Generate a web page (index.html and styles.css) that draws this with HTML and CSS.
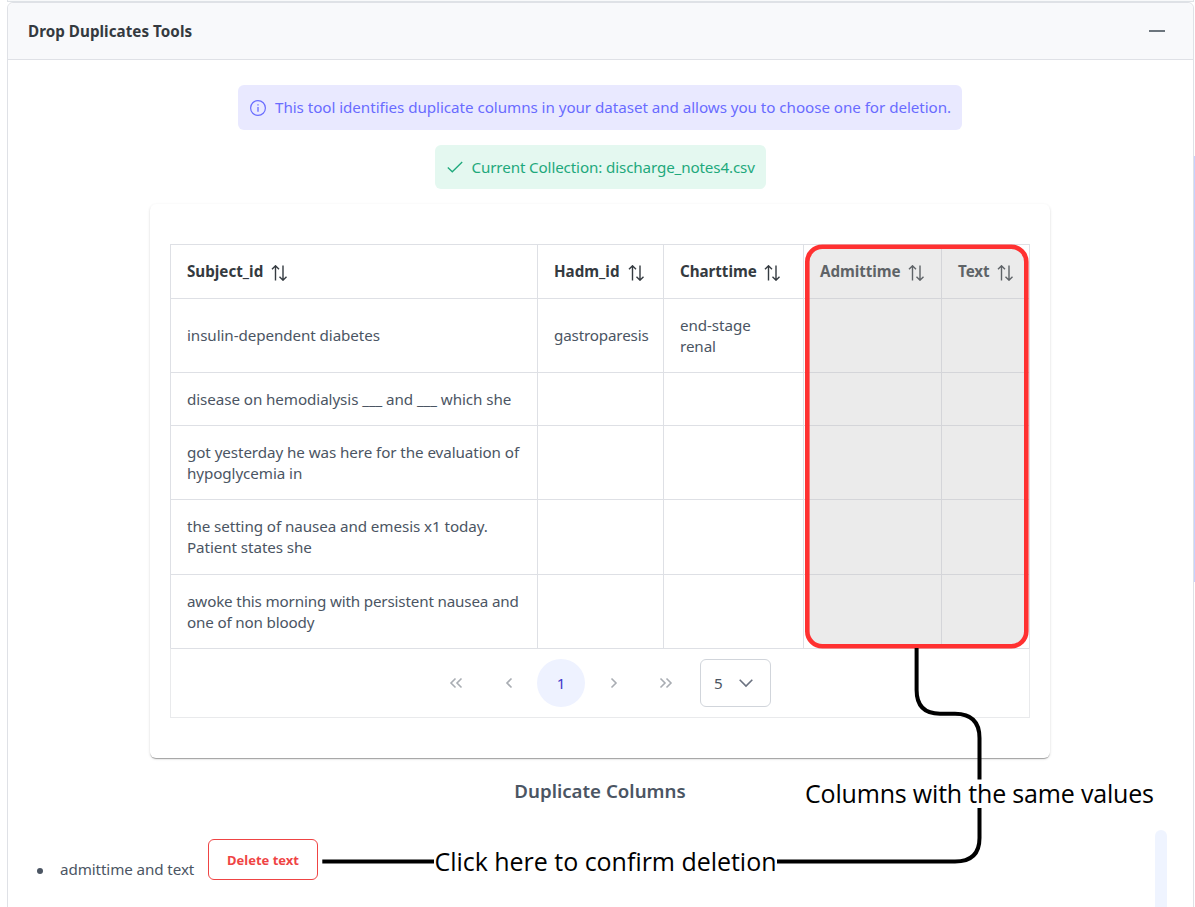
FILE: index.html
```html
<!DOCTYPE html>
<html lang="en">
<head>
<meta charset="utf-8">
<title>Drop Duplicates Tools</title>
<link rel="stylesheet" href="styles.css">
</head>
<body>
<svg class="defs" width="0" height="0">
  <symbol id="sort" viewBox="0 0 16 16"><path d="M4.500 15.500V1M1 4.300 4.500.8 8 4.300M12 .5V15M8.500 11.700 12 15.200 15.500 11.700" fill="none" stroke="currentColor" stroke-width="1.400"/></symbol>
</svg>
<div class="page">
  <div class="previous-panel"></div>
  <section class="panel">
    <header class="panel-header">
      <span class="panel-title">Drop Duplicates Tools</span>
      <span class="panel-toggle"></span>
    </header>
    <div class="panel-body">
      <div class="message info">
        <svg width="16" height="16" viewBox="0 0 16 16"><circle cx="8" cy="8" r="7.400" fill="none" stroke="currentColor" stroke-width="1.200"/><path d="M8 7v4.800M8 4.200v1.300" stroke="currentColor" stroke-width="1.300"/></svg>
        <span>This tool identifies duplicate columns in your dataset and allows you to choose one for deletion.</span>
      </div>
      <div class="message success">
        <svg width="16" height="16" viewBox="0 0 16 16"><path d="M.8 8.500 5.300 12.800 15.200 3" fill="none" stroke="currentColor" stroke-width="1.300"/></svg>
        <span>Current Collection: discharge_notes4.csv</span>
      </div>
      <div class="card">
        <table class="data">
          <colgroup><col class="c1"><col class="c2"><col class="c3"><col class="c4"><col class="c5"></colgroup>
          <thead>
            <tr class="head">
              <th><div class="th"><span>Subject_id</span><svg width="16" height="16"><use href="#sort"/></svg></div></th>
              <th><div class="th"><span>Hadm_id</span><svg width="16" height="16"><use href="#sort"/></svg></div></th>
              <th><div class="th snug"><span>Charttime</span><svg width="16" height="16"><use href="#sort"/></svg></div></th>
              <th><div class="th snug"><span>Admittime</span><svg width="16" height="16"><use href="#sort"/></svg></div></th>
              <th><div class="th snug"><span>Text</span><svg width="16" height="16"><use href="#sort"/></svg></div></th>
            </tr>
          </thead>
          <tbody>
            <tr class="double"><td>insulin-dependent diabetes</td><td class="tight">gastroparesis</td><td>end-stage<br>renal</td><td></td><td></td></tr>
            <tr class="single"><td>disease on hemodialysis ___ and ___ which she</td><td></td><td></td><td></td><td></td></tr>
            <tr class="double"><td>got yesterday he was here for the evaluation of<br>hypoglycemia in</td><td></td><td></td><td></td><td></td></tr>
            <tr class="double tall"><td>the setting of nausea and emesis x1 today.<br>Patient states she</td><td></td><td></td><td></td><td></td></tr>
            <tr class="double"><td class="tight">awoke this morning with persistent nausea and<br>one of non bloody</td><td></td><td></td><td></td><td></td></tr>
          </tbody>
        </table>
        <div class="paginator">
          <span class="page-btn"><svg width="14" height="14" viewBox="0 0 14 14"><path d="M6.500 2.500 2 7l4.500 4.500M12.500 2.500 8 7l4.500 4.500"/></svg></span>
          <span class="page-btn"><svg width="14" height="14" viewBox="0 0 14 14"><path d="M9.500 2.500 5 7l4.500 4.500"/></svg></span>
          <span class="page-btn current">1</span>
          <span class="page-btn"><svg width="14" height="14" viewBox="0 0 14 14"><path d="M4.500 2.500 9 7l-4.500 4.500"/></svg></span>
          <span class="page-btn"><svg width="14" height="14" viewBox="0 0 14 14"><path d="M1.500 2.500 6 7l-4.500 4.500M7.500 2.500 12 7l-4.500 4.500"/></svg></span>
          <span class="page-size"><span>5</span><svg width="14" height="14" viewBox="0 0 14 14"><path d="M.7 3.800 7 10.100l6.300-6.300"/></svg></span>
        </div>
      </div>
      <h3 class="subtitle">Duplicate Columns</h3>
      <div class="duplicates">
        <span class="dot"></span>
        <span class="pair">admittime and text</span>
        <button class="delete">Delete text</button>
        <span class="scroll-thumb"></span>
      </div>
    </div>
  </section>
  <div class="outer-thumb"></div>
  <svg class="annotations" width="1195" height="907" viewBox="0 0 1195 907">
    <rect x="807.300" y="246.800" width="219" height="399.500" rx="15" fill="#bebebe" fill-opacity=".31" stroke="#ff3131" stroke-width="4.600"/>
    <path d="M916.600 648V690Q916.600 713.700 940 713.700H955Q979.500 713.700 979.500 738V779.500M979.500 808V838Q979.500 861.500 955 861.500H777M434 861.500H322.300" fill="none" stroke="#000" stroke-width="4"/>
    <text x="805" y="802.500" textLength="349">Columns with the same values</text>
    <text x="434.500" y="870.500" textLength="342">Click here to confirm deletion</text>
  </svg>
</div>
</body>
</html>
```
FILE: styles.css
```css
* { box-sizing: border-box; }
body {
  margin: 0;
  background: #fff;
  color: #4b5563;
  font: 15.2px/20.600px "Noto Sans", "Open Sans", sans-serif;
}
.defs { position: absolute; }
.page { position: relative; width: 1195px; height: 907px; overflow: hidden; padding: 0 1px 0 7px; }
.previous-panel { height: 2px; background: #f8f9fa; border: 1px solid #dee2e6; border-top: 0; }
.panel { height: 920px; border: 1px solid #dfe1e6; border-radius: 6px 6px 0 0; background: #fff; }
.panel-header {
  height: 57px;
  display: flex;
  align-items: center;
  justify-content: space-between;
  padding: 0 28px 0 20px;
  background: #f8f9fb;
  border-bottom: 1px solid #dfe1e6;
  border-radius: 6px 6px 0 0;
}
.panel-title { font-weight: 700; color: #343a40; letter-spacing: .04px; }
.panel-toggle { width: 16px; height: 2px; background: #6c757d; }
.panel-body { display: flex; flex-direction: column; align-items: center; padding: 25px 1px 0 0; }
.message {
  display: flex;
  align-items: center;
  gap: 9px;
  padding: 0 12px;
  border-radius: 6px;
  white-space: nowrap;
}
.message svg { flex: none; }
.info { width: 724px; height: 45px; background: #e9e9ff; color: #696cff; letter-spacing: -.05px; }
.success { width: 331px; height: 44px; margin-top: 15px; background: #e4f8f0; color: #1ea97c; letter-spacing: -.13px; }
.card {
  width: 900px;
  height: 554px;
  margin-top: 15px;
  padding: 40px 20px 0;
  border-radius: 6px;
  box-shadow: 0 2px 1px -1px rgba(0,0,0,.2), 0 1px 1px rgba(0,0,0,.14), 0 1px 3px rgba(0,0,0,.12);
}
.data { width: 860px; table-layout: fixed; border-collapse: separate; border-spacing: 0; }
.c1 { width: 367px; }
.c2 { width: 126px; }
.c3 { width: 140px; }
.c4 { width: 138px; }
.c5 { width: 89px; }
.data th, .data td {
  padding: 0 0 0 16px;
  border: solid #dee0e5;
  border-width: 1px 0 0 1px;
  text-align: left;
  vertical-align: middle;
  white-space: nowrap;
}
.data td { letter-spacing: -.08px; }
.data td.tight { letter-spacing: -.16px; }
.data th:last-child, .data td:last-child { border-right-width: 1px; }
.head { height: 54px; }
.double { height: 74px; }
.single { height: 53px; }
.tall { height: 75px; }
.data th { font-weight: 700; color: #343a40; }
.th { display: flex; align-items: center; gap: 8px; }
.snug { gap: 7px; letter-spacing: -.05px; }
.th svg { position: relative; top: 1px; }
.paginator {
  height: 70px;
  display: flex;
  align-items: center;
  justify-content: center;
  gap: 4.500px;
  padding-left: 3px;
  border: 1px solid #e9eaec;
  border-top-color: #dee0e5;
}
.paginator path { fill: none; stroke: currentColor; stroke-width: 1.600; }
.page-btn { width: 48px; height: 48px; display: flex; align-items: center; justify-content: center; border-radius: 50%; color: #a9adb3; }
.current { background: #eef2ff; color: #4338ca; }
.page-size {
  width: 71px;
  height: 48px;
  margin-left: 5.500px;
  padding: 0 17px 0 13px;
  display: flex;
  align-items: center;
  justify-content: space-between;
  border: 1px solid #d1d5db;
  border-radius: 6px;
}
.page-size svg { color: #6b7280; }
.subtitle { margin: 20px 0 0; font-size: 18.700px; line-height: 26px; font-weight: 600; }
.duplicates { align-self: stretch; display: flex; align-items: flex-start; padding: 26px 25px 0 29px; }
.dot { width: 6px; height: 6px; margin-top: 38px; border-radius: 50%; background: #4b5563; }
.pair { width: 148px; margin: 29px 0 0 17px; white-space: nowrap; letter-spacing: -.1px; }
.delete {
  width: 110px;
  height: 41px;
  margin-top: 9px;
  padding: 0;
  border: 1px solid #ef4444;
  border-radius: 6px;
  background: transparent;
  color: #ef4444;
  font: 700 13px "Noto Sans", sans-serif;
}
.scroll-thumb { width: 12px; height: 100px; margin-left: auto; border-radius: 6px; background: #eff4ff; }
.outer-thumb { position: absolute; left: 1194px; top: 156px; width: 1px; height: 426px; background: #c7d2fe; }
.annotations { position: absolute; left: 0; top: 0; font: 25px "Open Sans", sans-serif; }
```
